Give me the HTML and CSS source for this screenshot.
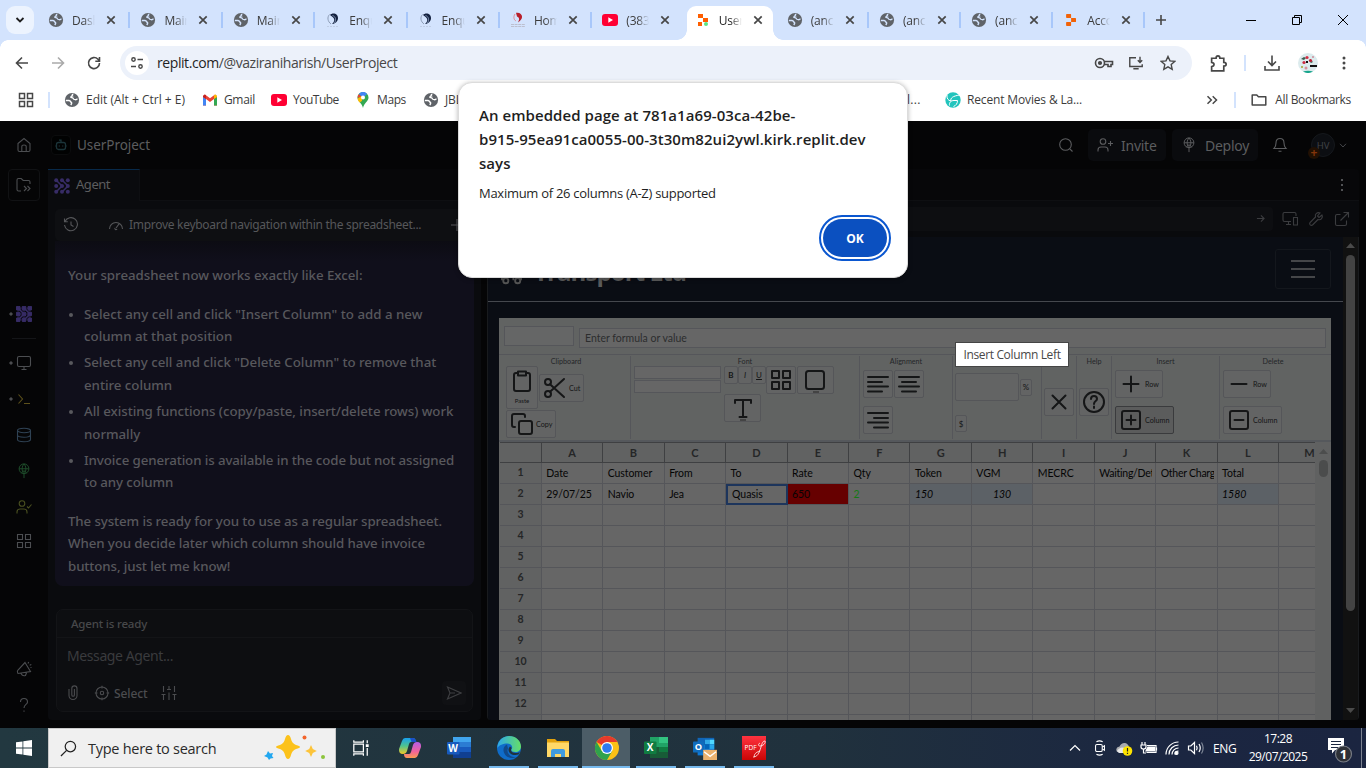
FILE: index.html
```html
<!DOCTYPE html>
<html lang="en">
<head>
<meta charset="utf-8">
<title>UserProject</title>
<link rel="stylesheet" href="styles.css">
</head>
<body>
<svg class="defs" aria-hidden="true">
  <symbol id="globe" viewBox="0 0 16 16"><circle cx="8" cy="8" r="7.100" fill="#5f6368"/><path d="M9.300 2.200c-1.300.3-1.500 1-.8 1.700-.9.300-2 .8-1.600 1.600.9.300 1.700 0 2.300.9.300 1 1 1.300 2 1.300 1.200.2 1.300-.5 2.300-.8" fill="none" stroke="currentColor" stroke-width="1.300"/><path d="M1.800 8.500h3.300c1.500.1 1.100 1.300 2.100 1.800 1 .6.300 1.500-.4 2.700" fill="none" stroke="currentColor" stroke-width="1.500"/></symbol>
  <symbol id="x" viewBox="0 0 10 10"><path d="M1.300 1.300l7.400 7.400M8.700 1.300L1.300 8.700" fill="none" stroke="#474747" stroke-width="1.700"/></symbol>
  <symbol id="swirl" viewBox="0 0 16 16"><path d="M5 3C7.500 0 13.500 1.500 13 6.500c-.5 4-4 5.500-6 5.500C10.500 9 9.500 6 7 4.500z" fill="#13213f"/><path d="M4.500 2.500C2 5 2.500 9.500 6 12" fill="none" stroke="#8393ad" stroke-width=".9"/><path d="M7.500 3.500c3 1 4 4 2 7.500" fill="none" stroke="#a9bddd" stroke-width=".7"/><path d="M2 14.500h12" stroke="#b4c0d6" stroke-width=".6" stroke-dasharray="2 1"/></symbol>
  <symbol id="redswirl" viewBox="0 0 16 16"><path d="M6 .8c6-1 9 5 2 9.700 2-4 1-5-1-6z" fill="#b81f2b"/><path d="M5 2C3 5 4 8 6 9" fill="none" stroke="#dc8d98"/><path d="M1 12.500h14M1 14.500h14" stroke="#b9bbc9" stroke-width=".9" stroke-dasharray="3 .6"/></symbol>
  <symbol id="yt" viewBox="0 0 16 12"><rect width="16" height="12" rx="3" fill="#ff0033"/><path d="M6.300 3.200v5.600L11 6z" fill="#fff"/></symbol>
  <symbol id="replit" viewBox="0 0 10 12"><path d="M.8 0H4.500q.6 0 .6.700V4H.8q-.7 0-.7-.7V.7Q.1 0 .8 0zM5.100 4H9.300q.7 0 .7.700v2.700q0 .7-.7.700H5.100zM.8 8H5.100v3.300q0 .7-.6.700H.8q-.7 0-.7-.7V8.700Q.1 8 .8 8z" fill="#f26207"/></symbol>
  <symbol id="agent" viewBox="0 0 16 16"><g fill="currentColor"><circle cx="2.200" cy="2.200" r="2"/><circle cx="8" cy="2.200" r="2"/><circle cx="13.800" cy="2.200" r="2"/><circle cx="2.200" cy="8" r="2"/><circle cx="8" cy="8" r="2"/><circle cx="13.800" cy="8" r="2"/><circle cx="2.200" cy="13.800" r="2"/><circle cx="8" cy="13.800" r="2"/><circle cx="13.800" cy="13.800" r="2"/></g><path d="M2 2l6 6-6 6M8 2l6 6-6 6" fill="none" stroke="currentColor" stroke-width="1.500"/></symbol>
  <symbol id="apps" viewBox="0 0 16 16"><path d="M1.500 1.500h5v5h-5zM9.500 1.500h5v5h-5zM1.500 9.500h5v5h-5zM9.500 9.500h5v5h-5z"/></symbol>
  <symbol id="deploy" viewBox="0 0 16 18"><circle cx="8" cy="6.500" r="5.500"/><path d="M2.500 6.500h11M8 1C5.500 4 5.500 7 6.500 10M8 1c2.500 3 2.500 6 1.500 9M8 17V9M5 11.500l3-3 3 3"/></symbol>
</svg>

<div class="tabstrip">
  <div class="tabsearch"><svg viewBox="0 0 10 6"><path d="M1.500 1L5 4.500 8.500 1" fill="none" stroke="#1f1f1f" stroke-width="1.800"/></svg></div>
  <div class="tab"><svg class="fav"><use href="#globe"/></svg><span>Dash</span><svg class="close"><use href="#x"/></svg></div>
  <div class="tab"><svg class="fav"><use href="#globe"/></svg><span>Main</span><svg class="close"><use href="#x"/></svg></div>
  <div class="tab"><svg class="fav"><use href="#globe"/></svg><span>Main</span><svg class="close"><use href="#x"/></svg></div>
  <div class="tab"><svg class="fav"><use href="#swirl"/></svg><span>Enqu</span><svg class="close"><use href="#x"/></svg></div>
  <div class="tab"><svg class="fav"><use href="#swirl"/></svg><span>Enqu</span><svg class="close"><use href="#x"/></svg></div>
  <div class="tab"><svg class="fav"><use href="#redswirl"/></svg><span>Hom</span><svg class="close"><use href="#x"/></svg></div>
  <div class="tab last"><svg class="fav"><use href="#yt" y="2" height="12"/></svg><span>(383</span><svg class="close"><use href="#x"/></svg></div>
  <div class="tab active"><svg class="fav" viewBox="0 0 16 16"><path d="M3 2h5v4H3zM8 6h5v4H8zM3 10h4v4H3z" fill="#ff5e00"/><circle cx="11" cy="12" r="2" fill="#5be583"/></svg><span>User</span><svg class="close"><use href="#x"/></svg></div>
  <div class="tab after"><svg class="fav"><use href="#globe"/></svg><span>(anc</span><svg class="close"><use href="#x"/></svg></div>
  <div class="tab after"><svg class="fav"><use href="#globe"/></svg><span>(anc</span><svg class="close"><use href="#x"/></svg></div>
  <div class="tab after"><svg class="fav"><use href="#globe"/></svg><span>(anc</span><svg class="close"><use href="#x"/></svg></div>
  <div class="tab after"><svg class="fav"><use href="#replit" x="3" y="2" width="10" height="12"/></svg><span>Acco</span><svg class="close"><use href="#x"/></svg></div>
  <svg class="newtab" viewBox="0 0 12 12"><path d="M6 1v10M1 6h10" stroke="#474747" stroke-width="1.600"/></svg>
  <div class="winbtns">
    <svg viewBox="0 0 12 12"><path d="M1 6.500h10" stroke="#000"/></svg>
    <svg viewBox="0 0 12 12"><path d="M1.500 3.500h7v7h-7zM3.500 3.500v-2h7v7h-2" fill="none" stroke="#000"/></svg>
    <svg viewBox="0 0 12 12"><path d="M1 1l10 10M11 1L1 11" stroke="#000"/></svg>
  </div>
</div>

<div class="toolbar">
  <svg class="nav" viewBox="0 0 16 16"><path d="M14 8H3M8 2.500L2.500 8 8 13.500"/></svg>
  <svg class="nav off" viewBox="0 0 16 16"><path d="M2 8h11M8 2.500L13.500 8 8 13.500"/></svg>
  <svg class="nav" viewBox="0 0 16 16"><path d="M13.500 8A5.500 5.500 0 1 1 12 4.300L13.500 6M13.500 2v4.300H9.300"/></svg>
  <div class="omnibox">
    <div class="site"><svg viewBox="0 0 14 14"><path d="M7.500 3.500H13M1 10.500h5" stroke-width="1.700"/><circle cx="3.500" cy="3.500" r="1.700"/><circle cx="10.500" cy="10.500" r="1.700"/></svg></div>
    <span class="url"><b>replit.com</b>/@vaziraniharish/UserProject</span>
    <svg class="oi wide" viewBox="0 0 20 16"><circle cx="6" cy="8" r="4.500"/><circle cx="6" cy="8" r="1.300" fill="#474747"/><path d="M10.200 6.500h8.300v3H17v2h-3v-2h-3.800"/></svg>
    <svg class="oi" viewBox="0 0 18 16"><path d="M9 2H2v10h14V9.500M6 14.500h6M13.500 1v6M11 4.800L13.500 7.300 16 4.800"/></svg>
    <svg class="oi" viewBox="0 0 16 16"><path d="M8 1.500l2 4.400 4.700.5-3.500 3.200 1 4.700L8 11.900l-4.200 2.400 1-4.700L1.300 6.400 6 5.900z" stroke-width="1.400"/></svg>
  </div>
  <svg class="ext" viewBox="0 0 18 18"><path d="M2.500 4h4.200c0-3 3.600-3 3.600 0H14v4c3 0 3 3.500 0 3.500V16H2.500v-4c3-.5 3-3.500 0-4z"/></svg>
  <i class="sep"></i>
  <svg class="dl" viewBox="0 0 18 18"><path d="M9 1.500v9.500M5 7.500L9 11.500l4-4M2 12v4h14v-4"/></svg>
  <svg class="profile" viewBox="0 0 20 20"><circle cx="10" cy="10" r="10" fill="#dcebed"/><path d="M3 6l3-2 2 1-2 2zM12 9l2-1 1 1-2 1z" fill="#3b5c50"/><circle cx="9" cy="4.500" r="1.600" fill="#d22f45"/><circle cx="12.500" cy="7.500" r="1.600" fill="#b91e33"/><circle cx="15" cy="4" r="1" fill="#cf8d9a"/><circle cx="6" cy="9.500" r="1.600" fill="#cb2a41"/><circle cx="8" cy="15" r="1.500" fill="#d78f9a"/><circle cx="4" cy="14" r="1" fill="#a5a02c"/><path d="M12 12h7v2h-7zM8 8h2v2H8z" fill="#111"/><path d="M5 18.600q5-1.500 10 0a10 10 0 0 1-10 0z" fill="#17a58c"/></svg>
  <svg class="kebab" viewBox="0 0 4 14"><circle cx="2" cy="2" r="1.500"/><circle cx="2" cy="7" r="1.500"/><circle cx="2" cy="12" r="1.500"/></svg>
</div>

<div class="bookmarks">
  <svg class="bapps"><use href="#apps"/></svg>
  <i class="bsep"></i>
  <div class="bm b1"><svg><use href="#globe"/></svg><span>Edit (Alt + Ctrl + E)</span></div>
  <div class="bm b2"><svg viewBox="0 0 16 16"><path d="M1 4v9.500h3V7l4 3 4-3v6.500h3V4L13 2.500 8 6.300 3 2.500z" fill="#ea4335"/><path d="M1 5v8.500h3V7z" fill="#4285f4"/><path d="M15 5v8.500h-3V7z" fill="#34a853"/><path d="M12 7V3.300l1.500-.8L15 4v1z" fill="#fbbc04"/><path d="M4 7V3.300L2.500 2.500 1 4v1z" fill="#c5221f"/></svg><span>Gmail</span></div>
  <div class="bm b3"><svg><use href="#yt" y="2" height="12"/></svg><span>YouTube</span></div>
  <div class="bm b4"><svg viewBox="0 0 16 16"><path d="M8 0a5.500 5.500 0 0 0-5.500 5.700C2.500 9 7 11 8 16c1-5 5.500-7 5.500-10.300A5.500 5.500 0 0 0 8 0z" fill="#34a853"/><path d="M2.500 5.700A5.500 5.500 0 0 1 4 1.900L7 5z" fill="#ea4335"/><path d="M4 1.900C6-.6 10-.6 12 1.900L8 6z" fill="#4285f4"/><path d="M2.600 6.500L7 4v5l-2.500 1.500C3.500 9 2.700 8 2.600 6.500z" fill="#fbbc04"/><circle cx="8" cy="5.500" r="2" fill="#fff"/></svg><span>Maps</span></div>
  <div class="bm b5"><svg><use href="#globe"/></svg><span>JBL</span></div>
  <div class="bm b6"><span>l...</span></div>
  <div class="bm b7"><svg viewBox="0 0 16 16"><circle cx="8" cy="8" r="7.700" fill="#22c4bd"/><path d="M2 2.500c-.5 4 1 6 4 6.500-1-3 2-5 8.500-6M4.500 13.500C4 10.500 6 8.500 9 8.500h3.500c0 3-1.500 5-4 6" fill="none" stroke="#fff" stroke-width="1"/><path d="M12.500 1l2.500 3V1z" fill="#fff"/></svg><span>Recent Movies &amp; La...</span></div>
  <svg class="more" viewBox="0 0 12 10"><path d="M1.500 1.200L5.300 5 1.500 8.800M6.700 1.200L10.500 5 6.700 8.800"/></svg>
  <i class="bsep"></i>
  <div class="bm all"><svg viewBox="0 0 16 14"><path d="M1.200 12V2h4.600l1.600 1.700h7.400V12z" fill="none" stroke="#474747" stroke-width="1.500" stroke-linejoin="round"/></svg><span>All Bookmarks</span></div>
</div>

<div class="app">
  <aside class="rail">
    <svg class="ic home" viewBox="0 0 16 16"><path d="M2 6.500L8 1.500l6 5V13q0 1.500-1.500 1.500h-9Q2 14.500 2 13zM5.800 14V9.500Q5.800 8 8 8t2.200 1.500V14"/></svg>
    <div class="folder"><svg class="ic" viewBox="0 0 16 16"><path d="M5 14H2.500Q1 14 1 12.500V3Q1 1.500 2.500 1.500h2.700l2 2h5.300Q14 3.500 14 5v2M8 9l2.500 2.500L8 14M11.500 9l2.500 2.500-2.500 2.500"/></svg></div>
    <div class="r dot agentic"><svg class="ic"><use href="#agent"/></svg></div>
    <hr>
    <div class="r dot"><svg class="ic" viewBox="0 0 16 16"><rect x="1.500" y="1.500" width="13" height="10" rx="1.500"/><path d="M8 11.500v3M5.500 14.500h5"/></svg></div>
    <div class="r dot yellow"><svg class="ic" viewBox="0 0 16 16"><path d="M2.500 3.500L6.500 8l-4 4.500M8 12.500h6"/></svg></div>
    <div class="r blue"><svg class="ic" viewBox="0 0 16 16"><ellipse cx="8" cy="3.500" rx="6.500" ry="2.200"/><path d="M1.500 3.500v9c0 3 13 3 13 0v-9M1.500 8c0 3 13 3 13 0"/></svg></div>
    <div class="r green"><svg class="ic"><use href="#deploy"/></svg></div>
    <div class="r olive"><svg class="ic" viewBox="0 0 16 16"><circle cx="6" cy="4.500" r="2.800"/><path d="M1 14.500V13q0-3 3-3h4q3 0 3 3v1.500M11 7.500l1.500 1.500 3-3.500"/></svg></div>
    <div class="r last"><svg class="ic"><use href="#apps"/></svg></div>
    <div class="r horn"><svg class="ic" viewBox="0 0 16 16"><path d="M9 1.500l5.500 9L2 12.500Q.8 10.500 2 9zM5 12.500q1.500 3 4.500 2l1-2.700M12 2.500l.7-1.500M13.700 4.200l1.600-.7M14.500 6.500h1"/></svg></div>
    <div class="r"><svg class="ic" viewBox="0 0 16 16"><path d="M4.500 5q0-3.500 3.500-3.500T11.500 5C11.500 7.500 8 7.500 8 11M8 13.500v1.300"/></svg></div>
  </aside>

  <div class="workspace">
    <header class="apphead">
      <div class="bot"><svg viewBox="0 0 12 12"><rect x="1.500" y="3.500" width="9" height="7" rx="2"/><path d="M6 3.500V1.200H4M4.300 6.500v1M7.700 6.500v1M.5 7h1M10.500 7h1"/></svg></div>
      <span class="proj">UserProject</span>
      <svg class="ic srch" viewBox="0 0 16 16"><circle cx="7.500" cy="7.500" r="5.800"/><path d="M11.800 11.800l2.700 2.700"/></svg>
      <div class="hbtn inv"><svg class="ic" viewBox="0 0 16 16"><circle cx="6" cy="4.500" r="2.800"/><path d="M1 14.500V13q0-3 3-3h4q3 0 3 3v1.500M13.500 4v5M11 6.500h5"/></svg><span>Invite</span></div>
      <div class="hbtn dep"><svg class="ic"><use href="#deploy"/></svg><span>Deploy</span></div>
      <svg class="ic bell" viewBox="0 0 16 16"><path d="M2 11.500h12q-2-2-2-5.500Q12 1.500 8 1.500T4 6q0 3.500-2 5.500zM6.500 14.300h3"/></svg>
      <div class="avatar">HV<i>+</i></div>
      <svg class="chev" viewBox="0 0 8 5"><path d="M1 .8L4 4 7 .8"/></svg>
    </header>

    <div class="panels">
      <section class="chat">
        <div class="ptabs"><div class="ptab"><svg><use href="#agent"/></svg><span>Agent</span></div></div>
        <div class="chatbar">
          <svg class="ic" viewBox="0 0 16 16"><path d="M2 4.500A6.500 6.500 0 1 1 1.500 8M1.500 1.500v3.300h3.300M8 4.500V8l2.500 1.500"/></svg>
          <svg class="ic g" viewBox="0 0 16 16"><path d="M1.500 12a6.500 6.500 0 1 1 13 0M8 11l3-4M7 11a1 1 0 1 0 2 1"/></svg>
          <span>Improve keyboard navigation within the spreadsheet...</span>
          <svg class="ic p" viewBox="0 0 16 16"><path d="M8 2v12M2 8h12"/></svg>
        </div>
        <div class="bubble">
          <p>Your spreadsheet now works exactly like Excel:</p>
          <ul>
            <li class="wide1">Select any cell and click "Insert Column" to add a new<br>column at that position</li>
            <li>Select any cell and click "Delete Column" to remove that<br>entire column</li>
            <li>All existing functions (copy/paste, insert/delete rows) work<br>normally</li>
            <li class="tight">Invoice generation is available in the code but not assigned<br>to any column</li>
          </ul>
          <p class="tight">The system is ready for you to use as a regular spreadsheet.<br>When you decide later which column should have invoice<br>buttons, just let me know!</p>
        </div>
        <div class="composer">
          <div class="ready">Agent is ready</div>
          <div class="msg">Message Agent...</div>
          <div class="tools">
            <svg class="ic clip" viewBox="0 0 16 16"><path d="M4 4.500v6.500a4 4 0 0 0 8 0V4a2.600 2.600 0 0 0-5.200 0v6.500a1.300 1.300 0 0 0 2.600 0V4.500" transform="translate(0 -.5)"/></svg>
            <svg class="ic" viewBox="0 0 16 16"><circle cx="8" cy="8" r="6"/><circle cx="8" cy="8" r="1.700"/><path d="M8 .8v2.700M8 12.500v2.700M.8 8h2.700M12.500 8h2.700"/></svg>
            <span>Select</span>
            <svg class="ic" viewBox="0 0 16 16"><path d="M2.500 1v6M2.500 10v5M.5 9.500h4M8 1v3M8 7.500V15M6 4.500h4M13.500 1v6M13.500 10v5M11.500 9.500h4"/></svg>
            <div class="send"><svg class="ic" viewBox="0 0 16 16"><path d="M1.500 2L15 8 1.500 14 4 8zM4 8h5"/></svg></div>
          </div>
        </div>
      </section>

      <section class="preview">
        <div class="ptabs"><svg class="kb" viewBox="0 0 4 14"><path d="M1 1h2v2H1zM1 6h2v2H1zM1 11h2v2H1z"/></svg></div>
        <div class="urlrow">
          <div class="urlbox"><svg viewBox="0 0 10 10"><path d="M1 5h8M5.500 1.500L9 5 5.500 8.500"/></svg></div>
          <svg class="ic" viewBox="0 0 16 16"><path d="M9 10.500H2.500Q1 10.500 1 9V3q0-1.500 1.500-1.500h10Q14 1.500 14 3v2M6.500 10.500v3M4 13.500h5M11.500 6.500h4v7.500h-4z"/></svg>
          <svg class="ic" viewBox="0 0 16 16"><path d="M14 4l-3 2.500L9.500 5 12 2C9.500.8 6.500 3 7.500 6L2 11.500q-.8 1.200.2 2.300 1.200 1 2.300.2L10 8.500c3 1 5.200-2 4-4.500z"/></svg>
          <svg class="ic" viewBox="0 0 16 16"><path d="M6.500 3.500H3Q1.500 3.500 1.500 5v8q0 1.500 1.500 1.500h8q1.500 0 1.500-1.500V9.500M6.500 9.500L14 2M9.500 1.500h5v5"/></svg>
        </div>
        <div class="frame">
          <div class="page">
            <nav class="navbar">
              <svg class="truck" viewBox="0 0 24 20"><path d="M2 15V2h12v13M14 6h4l4 5v4"/><circle cx="6" cy="15.500" r="2.700"/><circle cx="18.500" cy="15.500" r="2.700"/></svg>
              <span class="brand">Transport Ltd</span>
              <div class="burger"><svg viewBox="0 0 24 20"><path d="M0 2h24M0 10h24M0 18h24"/></svg></div>
            </nav>
            <div class="sheet">
              <div class="fbar"><div class="name"></div><div class="formula">Enter formula or value</div></div>
              <div class="ribbon">
                <div class="grp clipb"><h6>Clipboard</h6><div class="btns">
                  <div class="b paste"><svg viewBox="0 0 24 24"><path d="M7.500 4H6Q4 4 4 6v14q0 2 2 2h12q2 0 2-2V6q0-2-2-2h-1.500M8 2.500h8v4H8z"/></svg>Paste</div>
                  <div class="b cut"><svg viewBox="0 0 24 24"><circle cx="6" cy="6" r="3"/><circle cx="6" cy="18" r="3"/><path d="M8 8.200L22 21M22 3L8 15.800"/></svg>Cut</div>
                  <div class="b copy"><svg viewBox="0 0 24 24"><rect x="9" y="9" width="13" height="13" rx="2"/><path d="M5 15H4q-2 0-2-2V4q0-2 2-2h9q2 0 2 2v1"/></svg>Copy</div>
                </div></div>
                <div class="grp font"><h6>Font</h6><div class="fontrow">
                  <div class="sels"><div></div><div></div></div>
                  <div class="btns">
                    <div class="b s"><b>B</b></div><div class="b s"><em>I</em></div><div class="b s"><u>U</u></div>
                    <div class="b sq"><svg viewBox="0 0 24 24"><path d="M3 3h7v7H3zM14 3h7v7h-7zM3 14h7v7H3zM14 14h7v7h-7z"/></svg></div>
                    <div class="b w swatch"><svg viewBox="0 0 24 24"><rect x="3" y="3" width="18" height="18" rx="2.500"/></svg></div>
                    <div class="b w swatch t"><svg viewBox="0 0 24 24"><path d="M4 7V4h16v3M12 4v17M8.500 21h7"/></svg></div>
                  </div></div></div>
                <div class="grp align"><h6>Alignment</h6><div class="btns">
                  <div class="b sq"><svg viewBox="0 0 24 24"><path d="M2 5h20M2 10h14M2 14.500h20M2 19.500h14"/></svg></div>
                  <div class="b sq"><svg viewBox="0 0 24 24"><path d="M2 5h20M5 10h14M2 14.500h20M5 19.500h14"/></svg></div>
                  <div class="b sq"><svg viewBox="0 0 24 24"><path d="M2 5h20M8 10h14M2 14.500h20M8 19.500h14"/></svg></div>
                </div></div>
                <div class="grp number"><h6></h6><div class="btns">
                  <div class="b sel"></div><div class="b s2">%</div><div class="b s2 d">$</div>
                </div></div>
                <div class="grp one"><h6></h6><div class="btns"><div class="b sq"><svg viewBox="0 0 24 24"><path d="M5.500 5.500l13 13M18.500 5.500l-13 13"/></svg></div></div></div>
                <div class="grp one"><h6>Help</h6><div class="btns"><div class="b sq"><svg viewBox="0 0 24 24"><circle cx="12" cy="12" r="10"/><path d="M9 9q0-3 3-3t3 3c0 2-3 2.300-3 5M12 16.500v1.500"/></svg></div></div></div>
                <div class="grp ins"><h6>Insert</h6><div class="btns">
                  <div class="b row"><svg viewBox="0 0 24 24"><path d="M12 4.500v15M4.500 12h15"/></svg>Row</div>
                  <div class="b col hot"><svg viewBox="0 0 24 24"><rect x="3" y="3" width="18" height="18" rx="2"/><path d="M12 7.500v9M7.500 12h9"/></svg>Column</div>
                </div></div>
                <div class="grp del"><h6>Delete</h6><div class="btns">
                  <div class="b row"><svg viewBox="0 0 24 24"><path d="M4.500 12h15"/></svg>Row</div>
                  <div class="b col"><svg viewBox="0 0 24 24"><rect x="3" y="3" width="18" height="18" rx="2"/><path d="M7.500 12h9"/></svg>Column</div>
                </div></div>
              </div>
              <div class="gridwrap">
                <div class="gridview">
                <table class="cells">
                  <colgroup><col class="rh"><col span="13"></colgroup>
                  <thead><tr><th></th><th>A</th><th>B</th><th>C</th><th>D</th><th>E</th><th>F</th><th>G</th><th>H</th><th>I</th><th>J</th><th>K</th><th>L</th><th>M</th></tr></thead>
                  <tbody>
                  <tr><th>1</th><td>Date</td><td>Customer</td><td>From</td><td>To</td><td>Rate</td><td>Qty</td><td>Token</td><td>VGM</td><td>MECRC</td><td><div>Waiting/Det</div></td><td><div>Other Charg</div></td><td>Total</td><td></td></tr>
                  <tr><th>2</th><td>29/07/25</td><td>Navio</td><td>Jea</td><td class="sel">Quasis</td><td class="red">650</td><td class="grn">2</td><td class="calc">150</td><td class="calc mid">130</td><td></td><td></td><td></td><td class="calc">1580</td><td></td></tr>
                  <tr><th>3</th><td></td><td></td><td></td><td></td><td></td><td></td><td></td><td></td><td></td><td></td><td></td><td></td><td></td></tr>
                  <tr><th>4</th><td></td><td></td><td></td><td></td><td></td><td></td><td></td><td></td><td></td><td></td><td></td><td></td><td></td></tr>
                  <tr><th>5</th><td></td><td></td><td></td><td></td><td></td><td></td><td></td><td></td><td></td><td></td><td></td><td></td><td></td></tr>
                  <tr><th>6</th><td></td><td></td><td></td><td></td><td></td><td></td><td></td><td></td><td></td><td></td><td></td><td></td><td></td></tr>
                  <tr><th>7</th><td></td><td></td><td></td><td></td><td></td><td></td><td></td><td></td><td></td><td></td><td></td><td></td><td></td></tr>
                  <tr><th>8</th><td></td><td></td><td></td><td></td><td></td><td></td><td></td><td></td><td></td><td></td><td></td><td></td><td></td></tr>
                  <tr><th>9</th><td></td><td></td><td></td><td></td><td></td><td></td><td></td><td></td><td></td><td></td><td></td><td></td><td></td></tr>
                  <tr><th>10</th><td></td><td></td><td></td><td></td><td></td><td></td><td></td><td></td><td></td><td></td><td></td><td></td><td></td></tr>
                  <tr><th>11</th><td></td><td></td><td></td><td></td><td></td><td></td><td></td><td></td><td></td><td></td><td></td><td></td><td></td></tr>
                  <tr><th>12</th><td></td><td></td><td></td><td></td><td></td><td></td><td></td><td></td><td></td><td></td><td></td><td></td><td></td></tr>
                  <tr><th></th><td></td><td></td><td></td><td></td><td></td><td></td><td></td><td></td><td></td><td></td><td></td><td></td><td></td></tr>
                  </tbody>
                </table>
                </div>
                <div class="gscroll"><svg viewBox="0 0 9 5"><path d="M0 5L4.500 0 9 5z"/></svg><i></i></div>
              </div>
            </div>
          </div>
          <div class="pscroll"><svg viewBox="0 0 9 5"><path d="M0 5L4.500 0 9 5z"/></svg><i></i><svg viewBox="0 0 9 5"><path d="M0 0h9L4.500 5z"/></svg></div>
        </div>
      </section>
    </div>
  </div>
</div>

<div class="taskbar">
  <div class="start"><svg viewBox="0 0 16 16"><path d="M0 2.300L6.500 1.400V7.600H0zM7.300 1.300L16 0v7.600H7.300zM0 8.400h6.500v6.200L0 13.700zM7.300 8.400H16V16l-8.700-1.300z" fill="#fff"/></svg></div>
  <div class="search"><svg class="mag" viewBox="0 0 18 18"><circle cx="11" cy="7" r="5.500"/><path d="M7 11L1 17"/></svg><span>Type here to search</span>
    <svg class="sparkle" viewBox="0 0 62 26"><path d="M24 1q2 0 3 4 1 4.500 5 6 4 1 4 2t-4 2q-4 1.500-5 6-1 4-3 4t-3-4q-1-4.500-5-6-4-1-4-2t4-2q4-1.500 5-6 1-4 3-4z" fill="#fcc21b"/><path d="M47 11l1.800 4 4 2-4 2-1.800 4-1.800-4-4-2 4-2z" fill="#fcc43a"/><path d="M4 17l2 2.500 3-.5-1 3 1.500 2-3 .5L5 26l-1.500-2.500L0 22l2.500-1.500z" fill="#22a7f0"/><circle cx="40.500" cy="3.500" r="2" fill="#f2642c"/><circle cx="59" cy="23" r="2" fill="#8cc43c"/></svg></div>
  <div class="t"><svg viewBox="0 0 18 18" fill="none" stroke="#fff" stroke-width="1.300"><path d="M1.500 5h10v8h-10zM1.500 1v2h10V1M1.500 17v-2h10v2M15.500 1v3M15.500 9v8"/><path d="M14 5h3v3h-3z" fill="#fff" stroke="none"/></svg></div>
  <div class="t"><svg viewBox="0 0 24 24"><defs><linearGradient id="ca" x2="0" y2="1"><stop stop-color="#18a0ee"/><stop offset=".5" stop-color="#4fc38e"/><stop offset="1" stop-color="#f5c925"/></linearGradient><linearGradient id="cb" x2="0" y2="1"><stop stop-color="#b45de8"/><stop offset=".6" stop-color="#f2639a"/><stop offset="1" stop-color="#fb9b50"/></linearGradient></defs><path d="M7 2h8q2.500 0 3 4h-5q-1.500 0-2 2l-2 7q-1 3-4 3Q.5 18 1 13L4 5q1-3 3-3z" fill="url(#ca)"/><path d="M12 2h3q2.500 0 3.500 4h-5z" fill="#1a50c8"/><path d="M17 22H9q-3 0-3-4h5q1.500 0 2-2l2-7q1-3 4-3 4.500 0 4 5l-3 8q-1 3-3 3z" fill="url(#cb)"/></svg></div>
  <div class="t"><svg viewBox="0 0 24 24"><path d="M6 1h18v6H6z" fill="#41a5ee"/><path d="M6 6h18v6H6z" fill="#2b7cd3"/><path d="M6 11h18v6H6z" fill="#185abd"/><path d="M6 16h18v6H6z" fill="#103f91"/><rect y="6" width="12.500" height="12.500" rx="1" fill="#185abd"/><text x="6.200" y="15.500" text-anchor="middle" class="lt">W</text></svg></div>
  <div class="t run"><svg viewBox="0 0 24 24"><defs><linearGradient id="ed" x2="1"><stop stop-color="#2ea7e8"/><stop offset="1" stop-color="#65df67"/></linearGradient></defs><circle cx="12" cy="12" r="12" fill="#0f6cc9"/><path d="M.5 10C1.500 3.500 7 0 12 0c7 0 12 5 12 10.500 0 3.500-2.500 5.500-5.500 5.500-3 0-4.500-1-4-2.500 2-3-.5-6-4-6C6 7.500 2 9 .5 12z" fill="url(#ed)"/><path d="M10 8.500c-4 1.500-4.500 6.500-2 10s7 4.500 12 2.500c-3 .5-6 0-8-2.500-1.500-2-2-4-1-6z" fill="#114a8b"/><path d="M14.800 12c-2 2-.2 5 3.700 5 2 0 3.500-.5 4.500-1.500l-1.500 3c-5 1.500-10-.5-10-5 0-1 .5-2 1.500-3z" fill="#20323c"/></svg></div>
  <div class="t run"><svg viewBox="0 0 24 24"><path d="M1 3h8l2 2h12v3H1z" fill="#e2a10c"/><path d="M1 6.500h22V21H1z" fill="#ffd867"/><path d="M5 21v-6q0-2 2-2h10q2 0 2 2v6h-4v-3H9v3z" fill="#3f9be0"/></svg></div>
  <div class="t run on"><svg viewBox="0 0 24 24"><circle cx="12" cy="12" r="12" fill="#fbc116"/><path d="M12 12L1.600 6A12 12 0 0 1 22.400 6H12z" fill="#e53a2c"/><path d="M1.600 6A12 12 0 0 0 12 24l5.200-9L12 12 6.800 15z" fill="#2fa24c"/><circle cx="12" cy="12" r="6" fill="#fff"/><circle cx="12" cy="12" r="4.800" fill="#2e7bf0"/></svg></div>
  <div class="t run"><svg viewBox="0 0 24 24"><path d="M6 1h9v10H6z" fill="#21a366"/><path d="M15 1h9v6h-9z" fill="#33c481"/><path d="M15 7h9v5h-9z" fill="#21a366"/><path d="M6 11h18v11H6z" fill="#185c37"/><path d="M15 11h9v5h-9z" fill="#107c41"/><rect y="5.500" width="12.500" height="12.500" rx="1" fill="#107c41"/><text x="6.200" y="15" text-anchor="middle" class="lt">X</text></svg></div>
  <div class="t run two"><svg viewBox="0 0 26 26"><path d="M5 2h18v7H5z" fill="#1066b8"/><path d="M13 4h5v5h-5z" fill="#32a9e7"/><path d="M18 4h5v5h-5z" fill="#50d9ff"/><path d="M5 9h18v12H5z" fill="#0f78d4"/><path d="M13 9h5v5h-5z" fill="#0364b8"/><path d="M18 9h5v5h-5z" fill="#28a8ea"/><rect y="6" width="12" height="12" rx="1" fill="#0f6cbd"/><text x="6" y="15.500" text-anchor="middle" class="lt">O</text><path d="M11 15h15v11H11z" fill="#ecb26e"/><path d="M12 17l6.500 5 6.500-5" fill="none" stroke="#fff" stroke-width="1.500"/></svg></div>
  <div class="t run"><svg viewBox="0 0 24 24"><defs><linearGradient id="pd" x2="0" y2="1"><stop stop-color="#ff3340"/><stop offset="1" stop-color="#c90505"/></linearGradient></defs><path d="M0 0h24v24H0z" fill="url(#pd)"/><text x="8.500" y="14" text-anchor="middle" class="pdf">PDF</text><path d="M11 21c4 0 6-3 8-10 1-4 2-6 4-6 1 2-2 5-5 5-2 0-2-2 0-3M13 21c-2-2 1-5 5-6" fill="none" stroke="#fff" stroke-width=".8"/></svg></div>
  <div class="tray">
    <svg class="w1" viewBox="0 0 12 8"><path d="M1 6.500L6 1.500l5 5"/></svg>
    <svg class="w2" viewBox="0 0 14 18"><rect x="2" y="5" width="7.500" height="8" rx="1.500"/><path d="M9.500 8L12 6.500v5L9.500 10M3 2q3.500-2 7 0M3 16q3.500 2 7 0"/></svg>
    <svg class="w3" viewBox="0 0 18 16"><path d="M4 12.500Q1 12 1.300 9 2 6.500 4.500 6.500 6 3 9.500 3q3.500.3 4.500 4l2 6z" fill="#a9abae" stroke="none"/><path d="M2 11q3-5 8-3l5 5H4z" fill="#e8e8e8" stroke="none"/><circle cx="12.500" cy="11" r="4.800" fill="#fde300" stroke="none"/><path d="M12.500 8v3.500M12.500 12.800v1.200" stroke="#222"/></svg>
    <svg class="w3" viewBox="0 0 18 14"><path d="M7 4.500h9v7H6.500M16.500 6.500v3" /><path d="M8 6h6.500v4H6z" fill="#fff"/><path d="M2 1v3M5 1v3M1 4h5v2q0 2-2.500 2T1 6zM3.500 8v4H6"/></svg>
    <svg class="w2" viewBox="0 0 14 14"><path d="M1 13.500A12.500 12.500 0 0 1 13.500 1M4 13.500A9.500 9.500 0 0 1 13.500 4M7 13.500A6.500 6.500 0 0 1 13.500 7"/><circle cx="11.500" cy="12" r="1.500" fill="#fff"/><path d="M10 13.500A3.500 3.500 0 0 1 13.500 10" /></svg>
    <svg class="w3" viewBox="0 0 18 14"><path d="M1.500 5h2.300L7.500 1.500v11L3.800 9H1.500zM9.500 4.800q1.300 2.200 0 4.400M12 3q2.500 4 0 8"/><path d="M14.500 1.500q3.300 5.500 0 11" stroke="#7d8696"/></svg>
    <span class="eng">ENG</span>
    <div class="clock"><span>17:28</span><span>29/07/2025</span></div>
    <svg class="note" viewBox="0 0 26 26"><path d="M1 1h16v12H8l-3 3.500V13H1z" fill="#fff" stroke="none"/><path d="M4 4.500h10M4 7.500h10M4 10.500h7" stroke="#1b2740"/><circle cx="16.500" cy="17" r="8" fill="#2d3036" stroke="#777b84"/><text x="16.500" y="21.500" text-anchor="middle" class="cnt">1</text></svg>
  </div>
</div>

<div class="dialog">
  <h1>An embedded page at 781a1a69-03ca-42be-<br>b915-95ea91ca0055-00-3t30m82ui2ywl.kirk.replit.dev<br>says</h1>
  <p>Maximum of 26 columns (A-Z) supported</p>
  <button>OK</button>
</div>
<div class="tooltip">Insert Column Left</div>
</body>
</html>
```
FILE: styles.css
```css
* { box-sizing: border-box; }
body { margin: 0; width: 1366px; height: 768px; overflow: hidden; display: flex; flex-direction: column; position: relative; background: #050506; font-family: "Open Sans", "Noto Sans", sans-serif; font-size: 12px; color: #3c3c3c; }
svg { display: block; flex: none; }
.defs { position: absolute; width: 0; height: 0; }

/* tab strip */
.tabstrip { height: 40px; flex: none; background: #d3e3fd; display: flex; align-items: center; }
.tabsearch { width: 28px; height: 28px; margin: 0 4px 0 6px; border-radius: 9px; background: #ecf3fe; display: flex; align-items: center; justify-content: center; }
.tabsearch svg { width: 10px; height: 6px; }
.tab { width: 92.400px; height: 16px; flex: none; display: flex; align-items: center; padding-left: 10px; border-right: 2px solid #a8c7fa; }
.tab.after { width: 92.200px; }
.tab.last { border-color: transparent; }
.fav { width: 16px; height: 16px; color: #d3e3fd; }
.tab span { width: 23px; margin: 1px 11px 0 8px; overflow: hidden; white-space: nowrap; line-height: 18px; letter-spacing: -.2px; -webkit-mask-image: linear-gradient(90deg, #000 50%, transparent); mask-image: linear-gradient(90deg, #000 50%, transparent); }
.close { width: 10px; height: 10px; }
.tab.active { position: relative; height: 34px; margin: 6px 4px 0 2px; width: 86px; padding: 0 0 6px 8px; border: 0; border-radius: 9px 9px 0 0; background: #fff; color: #1f1f1f; }
.tab.active::before, .tab.active::after { content: ""; position: absolute; bottom: 0; width: 10px; height: 10px; }
.tab.active::before { left: -10px; background: radial-gradient(circle at 0 0, transparent 9.500px, #fff 10px); }
.tab.active::after { right: -10px; background: radial-gradient(circle at 100% 0, transparent 9.500px, #fff 10px); }
.newtab { width: 12px; height: 12px; margin-left: 10px; }
.winbtns { margin-left: auto; display: flex; gap: 34px; padding-right: 17px; }
.winbtns svg { width: 12px; height: 12px; }

/* toolbar */
.toolbar { height: 46px; flex: none; background: radial-gradient(circle at 8px 8px, #fff 7.500px, #d3e3fd 8px) 0 0 / 8px 8px no-repeat, radial-gradient(circle at 0 8px, #fff 7.500px, #d3e3fd 8px) 100% 0 / 8px 8px no-repeat, #fff; display: flex; align-items: center; padding-left: 14px; }
.toolbar svg { fill: none; stroke: #474747; stroke-width: 1.600; }
.nav { width: 16px; height: 16px; margin-right: 20px; }
.toolbar .off { stroke: #aaa; }
.nav + .omnibox { margin-left: -2px; }
.omnibox { width: 1072px; height: 34px; border-radius: 17px; background: #ecf1fa; display: flex; align-items: center; padding: 0 16px 0 5px; }
.site { width: 24px; height: 24px; border-radius: 50%; background: #fff; display: flex; align-items: center; justify-content: center; margin-right: 8px; }
.site svg { width: 14px; height: 14px; stroke-width: 1.400; }
.url { font-size: 14px; letter-spacing: -.42px; margin: -1px auto 0 0; color: #474747; }
.url b { font-weight: 400; color: #1f1f1f; }
.oi { width: 16px; height: 16px; margin-left: 16px; }
.wide { width: 20px; margin-right: -2px; }
.ext { width: 19px; height: 19px; margin-left: 17px; }
.sep { width: 2px; height: 16px; background: #d3e3fd; margin: 0 17px 0 16px; }
.dl { width: 18px; height: 18px; }
.toolbar .profile { width: 20px; height: 20px; margin-left: 17px; stroke: none; }
.toolbar .kebab { width: 4px; height: 14px; margin-left: 24px; fill: #474747; stroke: none; }

/* bookmarks bar */
.bookmarks { height: 35px; flex: none; background: #fff; display: flex; align-items: center; padding: 0 15px 7px 18px; }
.bapps { width: 16px; height: 16px; fill: none; stroke: #474747; stroke-width: 1.500; }
.bsep { width: 2px; height: 16px; background: #d3e3fd; margin-left: 14px; }
.bm { display: flex; align-items: center; gap: 6px; white-space: nowrap; letter-spacing: -.1px; }
.bm svg { width: 16px; height: 16px; color: #fff; }
.bm span { margin-top: -1px; }
.b1 { margin-left: 14px; width: 138px; }
.b2 { width: 69px; letter-spacing: -.35px; }
.b3 { width: 84px; letter-spacing: -.5px; }
.b4 { width: 68px; letter-spacing: -.4px; }
.b5 { width: 484px; }
.b6 { width: 38px; letter-spacing: .3px; }
.b7 { width: 261px; gap: 6px; }
.b7 span { letter-spacing: -.15px; }
.more { width: 12px; height: 10px; fill: none; stroke: #474747; stroke-width: 1.500; }
.more + .bsep { margin-left: 16px; }
.all { margin-left: auto; gap: 8px; letter-spacing: -.32px; }
.b1 span { letter-spacing: 0; }

/* workspace */
.app { height: 607px; flex: none; display: flex; background: #050506; color: #5c5d5f; font-family: "Noto Sans", sans-serif; }
.ic { width: 16px; height: 16px; fill: none; stroke: currentColor; stroke-width: 1.100; }
.rail { width: 48px; display: flex; flex-direction: column; align-items: center; color: #4c4e51; }
.home { margin-top: 16px; }
.folder { width: 32px; height: 32px; margin: 16px 0 95px; border: 1px solid #111214; border-radius: 4px; display: grid; place-items: center; }
.r { height: 36px; width: 48px; flex: none; display: grid; place-items: center; }
.dot { background: radial-gradient(circle at 11px 18px, #4b4c4f 1.300px, transparent 1.900px); }
.agentic { color: #372c66; }
.rail hr { width: 24px; height: 1px; border: 0; margin: 6px 0; background: #141518; flex: none; }
.yellow { color: #5d511b; }
.blue { color: #2f4254; }
.green { color: #1f4e2b; }
.olive { color: #4a5020; }
.rail .last { margin-top: -2px; margin-bottom: 92px; }
.workspace { width: 1318px; display: flex; flex-direction: column; }
.apphead { height: 48px; display: flex; align-items: center; padding-left: 3px; font-size: 14px; }
.bot { width: 20px; height: 20px; border-radius: 4px; background: #010202; border: 1px solid #0b0c0d; display: grid; place-items: center; }
.bot svg { width: 12px; height: 12px; fill: none; stroke: #1b3439; stroke-width: 1.300; }
.proj { margin: 0 auto 0 6px; font-size: 13.500px; letter-spacing: -.05px; }
.srch { margin-right: 14px; }
.hbtn { height: 32px; border-radius: 5px; background: #0a0b0e; display: flex; align-items: center; gap: 8px; padding-left: 9px; margin-right: 6px; }
.inv { width: 78px; }
.dep { width: 86px; }
.hbtn span { letter-spacing: -.25px; }
.bell { margin: 0 23px 0 8px; }
.avatar { width: 24px; height: 24px; border-radius: 50%; border: 1px solid #15181c; background: #0c0e12; font-size: 9.500px; display: grid; place-items: center; position: relative; color: #3f4145; }
.avatar i { position: absolute; left: -4px; bottom: -3px; width: 12px; height: 12px; border-radius: 50%; background: #211003; color: #83350a; font: bold 12px/11px "Noto Sans", sans-serif; text-align: center; }
.chev { width: 8px; height: 5px; margin: 0 19px 0 4px; fill: none; stroke: #45474a; }

.panels { height: 551px; display: flex; gap: 6px; }
.chat { width: 433px; background: #0a0b0e; border-radius: 4px; display: flex; flex-direction: column; }
.ptabs { height: 32px; flex: none; background: #070709; border-bottom: 1px solid #0e0f12; display: flex; border-radius: 4px 4px 0 0; }
.ptab { width: 92px; height: 32px; border-top: 1px solid #082a4a; border-right: 1px solid #0e0f12; background: #0a0b0e; display: flex; align-items: center; gap: 6px; padding-left: 6px; font-size: 13px; }
.ptab svg { width: 16px; height: 16px; color: #372c66; }
.ptab span { letter-spacing: -.45px; margin-top: -3px; }
.chatbar { height: 32px; margin: 8px 7px 0; border-radius: 5px; background: #0e0f12; display: flex; align-items: center; padding-left: 8px; font-size: 12px; white-space: nowrap; color: #56575a; }
.chatbar span { letter-spacing: -.29px; width: 320px; margin-top: -1px; }
.g { margin: 0 5px 0 29px; }
.p { margin-left: 0; }
.bubble { height: 345px; margin: 0 7px; padding: 22.500px 13px 0; border-radius: 0 0 8px 8px; background: linear-gradient(#0c0c13, #100f1b 20px); color: #58585d; font-size: 13.300px; line-height: 22.400px; font-weight: 500; letter-spacing: -.04px; white-space: nowrap; }
.bubble p { margin: 0; }
.bubble ul { margin: 16.600px 0 16px; padding-left: 16px; display: grid; gap: 4px; }
.bubble li::marker { font-size: 12px; }
.bubble .wide1 { letter-spacing: 0; }
.bubble .tight { letter-spacing: -.11px; }
.composer { height: 103px; margin: 23px 8px 0; border: 1px solid #131417; border-radius: 7px; background: #0d0e11; }
.ready { height: 28px; border-bottom: 1px solid #131417; padding: 6px 14px; font-size: 11.500px; line-height: 16px; font-weight: 500; letter-spacing: -.18px; color: #47484a; }
.msg { padding: 8px 10px 0; font-size: 14px; line-height: 20px; color: #3a3b3e; letter-spacing: -.4px; }
.tools { display: flex; align-items: center; margin-top: 15px; padding: 0 6px 0 8px; color: #4b4c4f; font-size: 12px; font-weight: 500; height: 24px; }
.clip { margin-right: 13px; }
.tools span { margin: 0 13px 0 4px; letter-spacing: -.1px; }
.send { margin-left: auto; width: 24px; height: 24px; border-radius: 4px; background: #101114; display: grid; place-items: center; color: #3f4043; }

/* preview pane */
.preview { width: 872px; display: flex; flex-direction: column; background: #090a0d; border-radius: 4px; }
.preview .ptabs { align-items: center; justify-content: flex-end; padding-right: 15px; }
.kb { width: 4px; height: 14px; fill: #515255; }
.urlrow { height: 36px; flex: none; display: flex; align-items: center; gap: 10px; padding: 0 9px 0 6px; color: #3b3c3f; }
.urlbox { flex: 1; height: 24px; border-radius: 4px; background: #0d0e11; display: flex; align-items: center; justify-content: flex-end; padding-right: 8px; margin: -1px -1px 0 0; }
.urlbox svg { width: 9px; height: 9px; fill: none; stroke: #3c3d40; stroke-width: 1.200; }
.frame { height: 483px; display: flex; border: 1px solid #191b1e; border-top: 0; border-bottom: 0; border-radius: 0 0 4px 4px; overflow: hidden; }
.page { width: 855px; flex: none; background: #0a0d14; display: flex; flex-direction: column; }
.pscroll { width: 15px; flex: none; background: #111; display: flex; flex-direction: column; align-items: center; padding: 6px 0 7px; }
.pscroll svg { width: 9px; height: 5px; fill: #4a4a4a; }
.pscroll i { width: 9px; height: 356px; margin: 7px 0 auto; border-radius: 5px; background: #434343; }
.navbar { height: 65px; flex: none; border-bottom: 1px solid #45484e; display: flex; align-items: center; padding-left: 12px; }
.truck { width: 23px; height: 19px; margin-top: 12px; fill: none; stroke: #555; stroke-width: 2; }
.brand { font: bold 24px/30px "Open Sans", sans-serif; letter-spacing: -.9px; color: #5b5b5b; margin: 5px auto 0 11px; }
.burger { width: 56px; height: 40px; margin-right: 12px; border: 1px solid #14171d; border-radius: 3px; display: grid; place-items: center; }
.burger svg { width: 24px; height: 20px; stroke: #454649; stroke-width: 2; }

/* spreadsheet */
.sheet { width: 832px; height: 402px; margin: 16px 0 0 11px; background: #616362; display: flex; flex-direction: column; color: #242527; font-family: "Lato", sans-serif; overflow: hidden; }
.fbar { height: 37px; flex: none; display: flex; padding: 8px 5px; gap: 5px; border-bottom: 1px solid #55565a; }
.name { width: 70px; height: 20px; border: 1px solid #55565a; background: #656666; }
.formula { flex: 1; height: 20px; margin-top: 2px; border: 1px solid #55565a; background: #666; padding-left: 5px; font-size: 10.500px; line-height: 18px; color: #2c2d2e; }
.ribbon { height: 87px; flex: none; display: flex; padding: 1px 0 2px; border-bottom: 2px solid #55585c; }
.grp { height: 83px; border-right: 1px solid #55565a; flex: none; padding-left: 3px; }
.grp h6 { margin: 0 3px 0 0; height: 10px; text-align: center; font: 400 7.200px/11px "Lato", sans-serif; color: #242628; }
.btns { display: flex; flex-wrap: wrap; align-content: flex-start; }
.b { height: 28px; border: 1px solid #555659; border-radius: 2px; background: #636464; display: flex; align-items: center; gap: 4px; font-size: 7.200px; color: #141516; }
.b svg { width: 24px; height: 24px; fill: none; stroke: #151617; stroke-width: 2; stroke-linecap: round; stroke-linejoin: round; }
.clipb { width: 132px; padding-left: 7px; }
.clipb h6 { margin-right: 4px; }
.clipb .btns { column-gap: 1px; row-gap: 1px; }
.paste { width: 32px; height: 43px; flex-direction: column; padding-top: 2px; gap: 4px; font-size: 6px; }
.cut { width: 45px; margin: 8px 30px 0 0; padding-left: 2px; gap: 3px; }
.copy { width: 50px; padding-left: 3px; gap: 2px; }
.font { width: 229px; }
.fontrow { display: flex; gap: 3px; }
.sels { width: 87px; display: grid; gap: 1px; align-content: start; }
.sels div { height: 13px; border: 1px solid #55565a; background: #666; }
.font .btns { width: 118px; }
.s { width: 14px; height: 18px; justify-content: center; font-size: 8px; }
.sq { width: 30px; padding-left: 2px; }
.w { width: 37px; margin-left: 1px; padding-left: 5px; }
.swatch { background: linear-gradient(#444 0 0) 50% 100% / 6px 2px no-repeat #636464; }
.t.w { margin: 0; padding-left: 6px; }
.align { width: 93px; }
.align .btns, .ins .btns, .del .btns { padding-top: 4px; column-gap: 1px; row-gap: 8px; }
.number { width: 89px; padding-left: 2px; }
.number .btns { padding-top: 7px; column-gap: 1px; align-items: center; }
.sel.b { width: 64px; }
.s2 { width: 12px; height: 17px; justify-content: center; font-size: 8px; margin-right: 5px; }
.s2.d { margin-top: 14px; }
.one { width: 35px; padding-left: 2px; }
.one h6 { margin-right: 2px; }
.one .btns { padding-top: 22px; }
.ins { width: 108px; }
.del { width: 111px; border: 0; }
.del h6 { margin-right: 8px; }
.row { width: 48px; padding-left: 3px; gap: 2px; }
.col { width: 59px; padding-left: 3px; margin-right: 30px; gap: 2px; }
.ins .row, .del .row { margin-right: 40px; }
.hot { background: #5b5c5c; border-color: #3a3b3d; }
.gridwrap { height: 278px; flex: none; display: flex; padding-left: 1px; }
.gridview { width: 815px; overflow: hidden; background: #666; }
.cells { border-collapse: separate; border-spacing: 0; table-layout: fixed; width: 840.700px; font-size: 10.500px; letter-spacing: -.08px; color: #050505; }
.cells col { width: 61.450px; }
.cells col.rh { width: 41.800px; }
.cells th, .cells td { height: 21px; padding: 0; border-right: 1px solid #55565a; border-bottom: 1px solid #55565a; overflow: hidden; white-space: nowrap; }
.cells td { padding: 1px 0 0 4.500px; text-align: left; line-height: 15px; }
.cells td div { width: 53px; overflow: hidden; letter-spacing: -.25px; }
.cells th { background: #616262; color: #252627; font-weight: 700; line-height: 14px; }
.cells tbody th { padding-bottom: 2px; }
.cells thead th { border-color: #3f4042; border-top: 1px solid #3f4042; font-size: 11px; }
.cells .sel { border: 2px solid #1d355c; padding: 0 0 0 4px; }
.cells .red { background: #660000; }
.cells .grn { color: #147a14; }
.cells .calc { background: #5c6166; font-style: italic; }
.cells .mid { text-align: center; padding-left: 0; }
.gscroll { width: 16px; background: #606161; display: flex; flex-direction: column; align-items: center; padding-top: 7px; }
.gscroll svg { width: 9px; height: 5px; fill: #4c4d4d; }
.gscroll i { width: 9px; height: 17px; border-radius: 5px; background: #4b4c4c; margin-top: 6px; }

/* taskbar */
.taskbar { height: 40px; flex: none; display: flex; background: linear-gradient(90deg, #223840, #20313d 60%, #1b2641 85%, #1b2540); color: #fff; }
.start { width: 48px; display: grid; place-items: center; }
.start svg { width: 16px; height: 16px; }
.search { width: 288px; background: #f0f0f0; border: 1px solid #c8c8c8; display: flex; align-items: center; color: #2b2b2b; font-size: 14.500px; padding: 0 9px 0 11px; letter-spacing: -.27px; }
.mag { width: 17px; height: 17px; fill: none; stroke: #222; stroke-width: 1.300; }
.search span { margin: 0 auto 0 11px; }
.sparkle { width: 62px; height: 26px; margin-top: -2px; }
.taskbar > .t { width: 49px; flex: none; display: grid; place-items: center; }
.taskbar > .t svg { width: 24px; height: 24px; }
.taskbar > .t.run { position: relative; left: 1px; }
.search + .t svg { transform: scale(.72); }
.lt { font: bold 10px "Open Sans", sans-serif; fill: #fff; }
.pdf { font: 6.500px "Open Sans", sans-serif; fill: #fff; }
.cnt { font: bold 13px "Open Sans", sans-serif; fill: #fff; stroke: none; }
.taskbar > .run { background: linear-gradient(#76b9ed 0 0) 50% 100% / 40px 2px no-repeat; }
.taskbar > .on { background: linear-gradient(#76b9ed 0 0) 0 100% / 48px 2px no-repeat, linear-gradient(#4c5d67 0 0) 0 0 / 48px 100% no-repeat; }
.tray { margin-left: auto; display: flex; align-items: center; padding-right: 9px; margin-right: 4px; border-right: 1px solid #7c8290; }
.tray svg { fill: none; stroke: #fff; stroke-width: 1.200; }
.w1 { width: 12px; height: 8px; margin-right: 12px; }
.w2 { width: 14px; height: 16px; margin-right: 8px; }
.w3 { width: 18px; height: 16px; margin-right: 7px; }
.eng { font-size: 12px; letter-spacing: -.3px; width: 24px; margin: 0 11px 0 1px; }
.clock { width: 60px; display: flex; flex-direction: column; align-items: center; font-size: 12px; line-height: 18px; letter-spacing: -.5px; }
.tray .note { width: 26px; height: 26px; margin: 4px -1px 0 19px; }

/* overlays */
.dialog { position: absolute; left: 458px; top: 82px; width: 450px; height: 196px; background: #fff; border: 1px solid #dcdcdc; border-radius: 14px; padding: 20px; color: #1f1f1f; box-shadow: 0 1px 5px rgba(0,0,0,.3); }
.dialog h1 { margin: 0; font-size: 15px; line-height: 24px; font-weight: 600; white-space: nowrap; letter-spacing: .06px; }
.dialog p { margin: 8px 0 0; font-size: 13px; line-height: 20px; letter-spacing: -.28px; }
.dialog button { display: block; width: 64px; height: 38px; margin: 16px 0 0 344px; border: 0; border-radius: 19px; background: #0b50c0; color: #fff; font: 700 12px "Open Sans", sans-serif; outline: 2px solid #0b57d0; outline-offset: 2px; }
.tooltip { position: absolute; left: 955px; top: 342px; width: 114px; height: 25px; border: 1px solid #454545; background: #fff; color: #484848; line-height: 23px; text-align: center; white-space: nowrap; letter-spacing: -.35px; }
```
